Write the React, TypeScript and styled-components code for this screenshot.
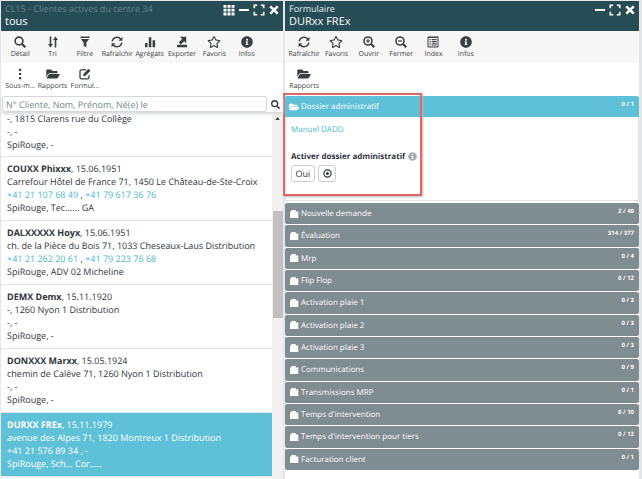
import React from "react";
import styled, { createGlobalStyle, css } from "styled-components";
import { FaSearch, FaRegStar, FaFolderOpen, FaInfoCircle } from "react-icons/fa";

const Global = createGlobalStyle`
  * { box-sizing: border-box; }
  html, body { margin: 0; }
  body {
    background: #f4f4f4;
    font-family: "Open Sans", "Noto Sans", sans-serif;
    font-size: 9px;
    color: #30363d;
    text-rendering: geometricPrecision;
  }
  button, input { font: inherit; color: inherit; text-rendering: inherit; }
`;

const Workspace = styled.div`
  display: grid;
  grid-template-columns: 47fr 59fr;
  gap: 2px;
  height: 100vh;
  padding: 1px 3px 0 1px;
  overflow: hidden;
  background: #e4e6e7;
`;

const Pane = styled.section`
  position: relative;
  display: flex;
  flex-direction: column;
  min-width: 0;
  min-height: 0;
  background: #fff;
`;

const TitleBar = styled.header`
  display: flex;
  justify-content: space-between;
  height: 30px;
  padding: 1px 3px 0 4px;
  background: #264d56;
  color: #fff;
`;

const Titles = styled.div`
  min-width: 0;
  white-space: nowrap;
`;

const Caption = styled.div<{ $muted?: boolean }>`
  font-size: 9px;
  line-height: 13px;
  color: ${(p) => (p.$muted ? "#688389" : "#e6eced")};
`;

const Title = styled.h1`
  margin: 0;
  font-size: 11px;
  line-height: 13px;
  font-weight: 400;
`;

const WindowButtons = styled.div`
  display: flex;
  gap: 3px;
  height: 15px;
  padding-top: 2px;
`;

const WindowButton = styled.button`
  display: flex;
  padding: 0;
  border: 0;
  background: none;
  svg { width: 12px; height: 12px; }
`;

const Toolbar = styled.nav<{ $columns: number; $end: number }>`
  display: grid;
  grid-template-columns: repeat(${(p) => p.$columns}, 1fr);
  padding: 0 ${(p) => p.$end}px 0 3px;
  background: linear-gradient(#f7f7f7 32px, #fff 32px);
`;

const Tool = styled.button`
  display: flex;
  flex-direction: column;
  align-items: center;
  min-width: 0;
  height: 32px;
  padding: 5px 0 0;
  border: 0;
  background: none;
  font-size: 7px;
  line-height: 11px;
  white-space: nowrap;
  color: #3b3f43;
  svg { width: 14px; height: 12px; margin-bottom: 1px; flex: none; }
`;

const SearchRow = styled.form`
  display: flex;
  height: 16px;
  margin: 1px 0 0 1px;
  box-shadow: 0 2px 3px #d5d8da;
  z-index: 1;
`;

const SearchInput = styled.input`
  flex: 1;
  min-width: 0;
  padding: 0 3px;
  border: 1px solid #d5d8da;
  border-radius: 2px;
  background: #fff;
  outline: 0;
  &::placeholder { color: #75868b; opacity: 1; }
`;

const SearchButton = styled.button`
  display: flex;
  align-items: center;
  justify-content: center;
  width: 16px;
  padding: 0;
  border: 0;
  background: #fff;
  svg { width: 9px; height: 9px; }
`;

const ListArea = styled.div`
  display: flex;
  flex: 1;
  min-height: 0;
`;

const List = styled.ul`
  flex: 1;
  min-width: 0;
  margin: 0;
  padding: 0;
  overflow: hidden;
  list-style: none;
`;

const Client = styled.li<{ $selected?: boolean; $partial?: boolean }>`
  padding: ${(p) => (p.$partial ? "0 6px 5px" : "5px 6px 6px")};
  border-bottom: 1px solid #e2e4e5;
  line-height: 13px;
  white-space: nowrap;
  ${(p) => p.$selected && css`
    background: #5ec1d8;
    color: #fff;
  `}
`;

const Phone = styled.a`
  color: #4fb8d1;
  text-decoration: none;
`;

const ScrollTrack = styled.div`
  display: grid;
  grid-template-rows: 12px 87fr 107fr 161fr;
  justify-items: center;
  width: 11px;
  background: #f0f0f0;
  svg { width: 5px; height: 3px; margin-top: 5px; }
`;

const ScrollThumb = styled.div`
  grid-row: 3;
  width: 10px;
  background: #c1c1c1;
`;

const OpenHeader = styled.button`
  display: flex;
  width: 100%;
  height: 21px;
  padding: 0 5px 0 4px;
  border: 0;
  border-radius: 2px 2px 0 0;
  background: #5ec1d8;
  color: #fff;
  font-size: 8px;
  text-align: left;
`;

const SectionHeader = styled(OpenHeader)`
  flex: 1;
  border-radius: 2px;
  background: #7f8c90;
`;

const SectionLabel = styled.span`
  display: flex;
  flex: 1;
  align-items: center;
  align-self: center;
  gap: 2px;
  line-height: 13px;
  svg { width: 10px; height: 10px; }
`;

const Count = styled.span`
  padding-top: 3px;
  font-size: 6px;
  line-height: 10px;
  font-weight: 700;
`;

const Form = styled.div`
  display: flex;
  flex: 1;
  flex-direction: column;
  min-height: 0;
  padding: 1px 0 9px;
`;

const OpenBody = styled.div`
  display: flex;
  flex-direction: column;
  height: 84px;
  padding: 6px 5px 0;
  border: solid #dfe1e2;
  border-width: 0 1px 1px;
  font-size: 8px;
  line-height: 13px;
`;

const Question = styled.div`
  display: flex;
  align-items: center;
  gap: 3px;
  margin-top: 14px;
  font-weight: 700;
  svg { width: 9px; height: 9px; color: #a9adaf; }
`;

const Answers = styled.div`
  display: flex;
  gap: 3px;
  margin-top: 2px;
`;

const Answer = styled.button<{ $wide?: boolean }>`
  display: flex;
  align-items: center;
  justify-content: center;
  width: ${(p) => (p.$wide ? 24 : 18)}px;
  height: 17px;
  padding: 0;
  border: 1px solid #ccced0;
  border-radius: 3px;
  background: #fff;
  font-size: 9px;
  svg { width: 9px; height: 9px; }
`;

const Sections = styled.div`
  display: flex;
  flex: 1;
  flex-direction: column;
  gap: 1px;
  margin-top: 2px;
`;

const Highlight = styled.div`
  position: absolute;
  top: 92px;
  left: -2px;
  width: 139px;
  height: 103px;
  border: 2px solid #e06666;
  box-shadow: 1px 1px 2px #b9b9b9;
  pointer-events: none;
`;

const stroke = { fill: "none", stroke: "currentColor", strokeWidth: 1.6 };
const Icon = {
  zoom: <svg viewBox="0 0 12 12" {...stroke}><circle cx="5" cy="5" r="3.9" /><path d="M7.8 7.8 11.3 11.3" strokeWidth="2.2" /></svg>,
  zoomIn: <svg viewBox="0 0 12 12" {...stroke}><circle cx="5" cy="5" r="4" /><path d="M7.8 7.8 11.3 11.3" strokeWidth="2.2" /><path d="M3 5h4M5 3v4" strokeWidth="1.2" /></svg>,
  zoomOut: <svg viewBox="0 0 12 12" {...stroke}><circle cx="5" cy="5" r="4" /><path d="M7.8 7.8 11.3 11.3" strokeWidth="2.2" /><path d="M3 5h4" strokeWidth="1.2" /></svg>,
  sort: <svg viewBox="0 0 12 12" {...stroke}><path d="M3.5.5V9M8.5 11.5V3" /><path d="M1 8h5L3.5 11.5zM6 4h5L8.5.5z" fill="currentColor" stroke="none" /></svg>,
  filter: <svg viewBox="0 0 12 12" fill="currentColor"><path d="M1.5.5h9v1.6h-9zM1.8 3h8.4L7.4 6.6v4.9L4.6 9.8V6.6z" /></svg>,
  refresh: <svg viewBox="0 0 12 12" {...stroke} strokeWidth={1.4}><path d="M1.2 5.4A4.8 4.8 0 0 1 10 3.5M10.8 6.6A4.8 4.8 0 0 1 2 8.5" /><path d="M11.4.8v4H7.6zM.6 11.2v-4h3.8z" fill="currentColor" stroke="none" /></svg>,
  bars: <svg viewBox="0 0 12 12" fill="currentColor"><path d="M1 7h2.5v4.3H1zM4.8 1.2h2.5v10.1H4.8zM8.6 4.3h2.5v7H8.6z" /></svg>,
  exporter: <svg viewBox="0 0 12 12" fill="currentColor"><path d="M1 8.8h10v2.5H1zM3.8.8h6.4v6.4L8.2 5.2 4.8 8.4 2.8 6.6 6 3z" /></svg>,
  dots: <svg viewBox="0 0 12 12" fill="currentColor"><path d="M5 .8h2.2V3H5zM5 4.9h2.2v2.2H5zM5 9h2.2v2.2H5z" /></svg>,
  form: <svg viewBox="0 0 12 12" {...stroke} strokeWidth={1.3}><path d="M7.2 1.8H2.4Q1 1.8 1 3.2v6.2q0 1.4 1.4 1.4h6.2q1.4 0 1.4-1.4V7.2" /><path d="M4.3 6.1 9.6.8l1.9 1.9-5.3 5.3H4.3z" fill="currentColor" stroke="none" /></svg>,
  index: <svg viewBox="0 0 12 12" {...stroke} strokeWidth={1}><path d="M1 1h10v10H1z" /><path d="M1 1.3h10M2.5 3.6h1.2m1 0h5M2.5 5.4h1.2m1 0h5M2.5 7.2h1.2m1 0h5M2.5 9h1.2m1 0h5" /></svg>,
  grid: <svg viewBox="0 0 12 12" fill="currentColor"><path d="M.5 1h3v2.8h-3zM4.5 1h3v2.8h-3zM8.5 1h3v2.8h-3zM.5 4.8h3v2.8h-3zM4.5 4.8h3v2.8h-3zM8.5 4.8h3v2.8h-3zM.5 8.6h3v2.8h-3zM4.5 8.6h3v2.8h-3zM8.5 8.6h3v2.8h-3z" /></svg>,
  minimize: <svg viewBox="0 0 12 12" fill="currentColor"><path d="M1 5h10v2H1z" /></svg>,
  maximize: <svg viewBox="0 0 12 12" {...stroke}><path d="M4.2 1.3H1.3v2.9M7.8 1.3h2.9v2.9M4.2 10.7H1.3V7.8M7.8 10.7h2.9V7.8" /></svg>,
  close: <svg viewBox="0 0 12 12" {...stroke} strokeWidth={2.6}><path d="m2.3 2.3 7.4 7.4m0-7.4L2.3 9.7" /></svg>,
  target: <svg viewBox="0 0 12 12" {...stroke}><circle cx="6" cy="6" r="4.8" /><circle cx="6" cy="6" r="2" fill="currentColor" stroke="none" /></svg>,
  folder: <svg viewBox="0 0 10 10" fill="currentColor"><path d="M1 2.4h1.3V1h4.4v1.4h2.6V9H1z" /></svg>,
};

type ToolItem = [React.ReactNode, string];

const listTools: ToolItem[] = [
  [Icon.zoom, "Détail"],
  [Icon.sort, "Tri"],
  [Icon.filter, "Filtre"],
  [Icon.refresh, "Rafraîchir"],
  [Icon.bars, "Agrégats"],
  [Icon.exporter, "Exporter"],
  [<FaRegStar />, "Favoris"],
  [<FaInfoCircle />, "Infos"],
  [Icon.dots, "Sous-m..."],
  [<FaFolderOpen />, "Rapports"],
  [Icon.form, "Formul..."],
];

const formTools: ToolItem[] = [
  [Icon.refresh, "Rafraîchir"],
  [<FaRegStar />, "Favoris"],
  [Icon.zoomIn, "Ouvrir"],
  [Icon.zoomOut, "Fermer"],
  [Icon.index, "Index"],
  [<FaInfoCircle />, "Infos"],
  [<FaFolderOpen />, "Rapports"],
];

const clients = [
  { name: "COUXX Phixxx", born: "15.06.1951", address: "Carrefour Hôtel de France 71, 1450 Le Château-de-Ste-Croix", phones: ["+41 21 107 68 49", "+41 79 617 36 76"], team: "SpiRouge, Tec...... GA" },
  { name: "DALXXXXX Hoyx", born: "15.06.1951", address: "ch. de la Pièce du Bois 71, 1033 Cheseaux-Laus Distribution", phones: ["+41 21 262 20 61", "+41 79 223 76 68"], team: "SpiRouge, ADV 02 Micheline" },
  { name: "DEMX Demx", born: "15.11.1920", address: "-, 1260 Nyon 1 Distribution", phones: [], team: "SpiRouge, -" },
  { name: "DONXXX Marxx", born: "15.05.1924", address: "chemin de Calève 71, 1260 Nyon 1 Distribution", phones: [], team: "SpiRouge, -" },
];

const sections = [
  ["Nouvelle demande", "2 / 40"],
  ["Évaluation", "314 / 377"],
  ["Mrp", "0 / 4"],
  ["Flip Flop", "0 / 12"],
  ["Activation plaie 1", "0 / 3"],
  ["Activation plaie 2", "0 / 3"],
  ["Activation plaie 3", "0 / 3"],
  ["Communications", "0 / 9"],
  ["Transmissions MRP", "0 / 1"],
  ["Temps d'intervention", "0 / 10"],
  ["Temps d'intervention pour tiers", "0 / 12"],
  ["Facturation client", "0 / 1"],
];

const Controls = ({ grid }: { grid?: boolean }) => (
  <WindowButtons>
    {grid && <WindowButton aria-label="Disposition">{Icon.grid}</WindowButton>}
    <WindowButton aria-label="Réduire">{Icon.minimize}</WindowButton>
    <WindowButton aria-label="Agrandir">{Icon.maximize}</WindowButton>
    <WindowButton aria-label="Fermer">{Icon.close}</WindowButton>
  </WindowButtons>
);

export default function App() {
  return (
    <>
      <Global />
      <Workspace>
        <Pane>
          <TitleBar>
            <Titles>
              <Caption $muted>CL15 - Clientes actives du centre 34</Caption>
              <Title>tous</Title>
            </Titles>
            <Controls grid />
          </TitleBar>
          <Toolbar $columns={8} $end={20}>
            {listTools.map(([icon, label]) => <Tool key={label}>{icon}{label}</Tool>)}
          </Toolbar>
          <SearchRow>
            <SearchInput aria-label="Recherche" placeholder="N° Cliente, Nom, Prénom, Né(e) le" />
            <SearchButton type="button" aria-label="Rechercher"><FaSearch /></SearchButton>
          </SearchRow>
          <ListArea>
            <List>
              <Client $partial>
                <div>-, 1815 Clarens rue du Collège</div>
                <div>-, -</div>
                <div>SpiRouge, -</div>
              </Client>
              {clients.map((c) => (
                <Client key={c.name}>
                  <div><b>{c.name}</b>, {c.born}</div>
                  <div>{c.address}</div>
                  {c.phones.length ? (
                    <div><Phone href="#">{c.phones[0]}</Phone> , <Phone href="#">{c.phones[1]}</Phone></div>
                  ) : <div>-, -</div>}
                  <div>{c.team}</div>
                </Client>
              ))}
              <Client $selected>
                <div><b>DURXX FREx</b>, 15.11.1979</div>
                <div>avenue des Alpes 71, 1820 Montreux 1 Distribution</div>
                <div>+41 21 576 89 34 , -</div>
                <div>SpiRouge, Sch... Cor.....</div>
              </Client>
            </List>
            <ScrollTrack>
              <svg viewBox="0 0 6 4"><path d="M3 0 6 4H0z" fill="#404040" /></svg>
              <ScrollThumb />
            </ScrollTrack>
          </ListArea>
        </Pane>
        <Pane>
          <TitleBar>
            <Titles>
              <Caption>Formulaire</Caption>
              <Title>DURxx FREx</Title>
            </Titles>
            <Controls />
          </TitleBar>
          <Toolbar $columns={6} $end={157}>
            {formTools.map(([icon, label]) => <Tool key={label}>{icon}{label}</Tool>)}
          </Toolbar>
          <Form>
            <OpenHeader>
              <SectionLabel><FaFolderOpen />Dossier administratif</SectionLabel>
              <Count>0 / 1</Count>
            </OpenHeader>
            <OpenBody>
              <Phone href="#">Manuel DADD</Phone>
              <Question>Activer dossier administratif <FaInfoCircle /></Question>
              <Answers>
                <Answer $wide>Oui</Answer>
                <Answer aria-label="Autre réponse">{Icon.target}</Answer>
              </Answers>
            </OpenBody>
            <Sections>
              {sections.map(([label, count]) => (
                <SectionHeader key={label}>
                  <SectionLabel>{Icon.folder}{label}</SectionLabel>
                  <Count>{count}</Count>
                </SectionHeader>
              ))}
            </Sections>
          </Form>
          <Highlight />
        </Pane>
      </Workspace>
    </>
  );
}
